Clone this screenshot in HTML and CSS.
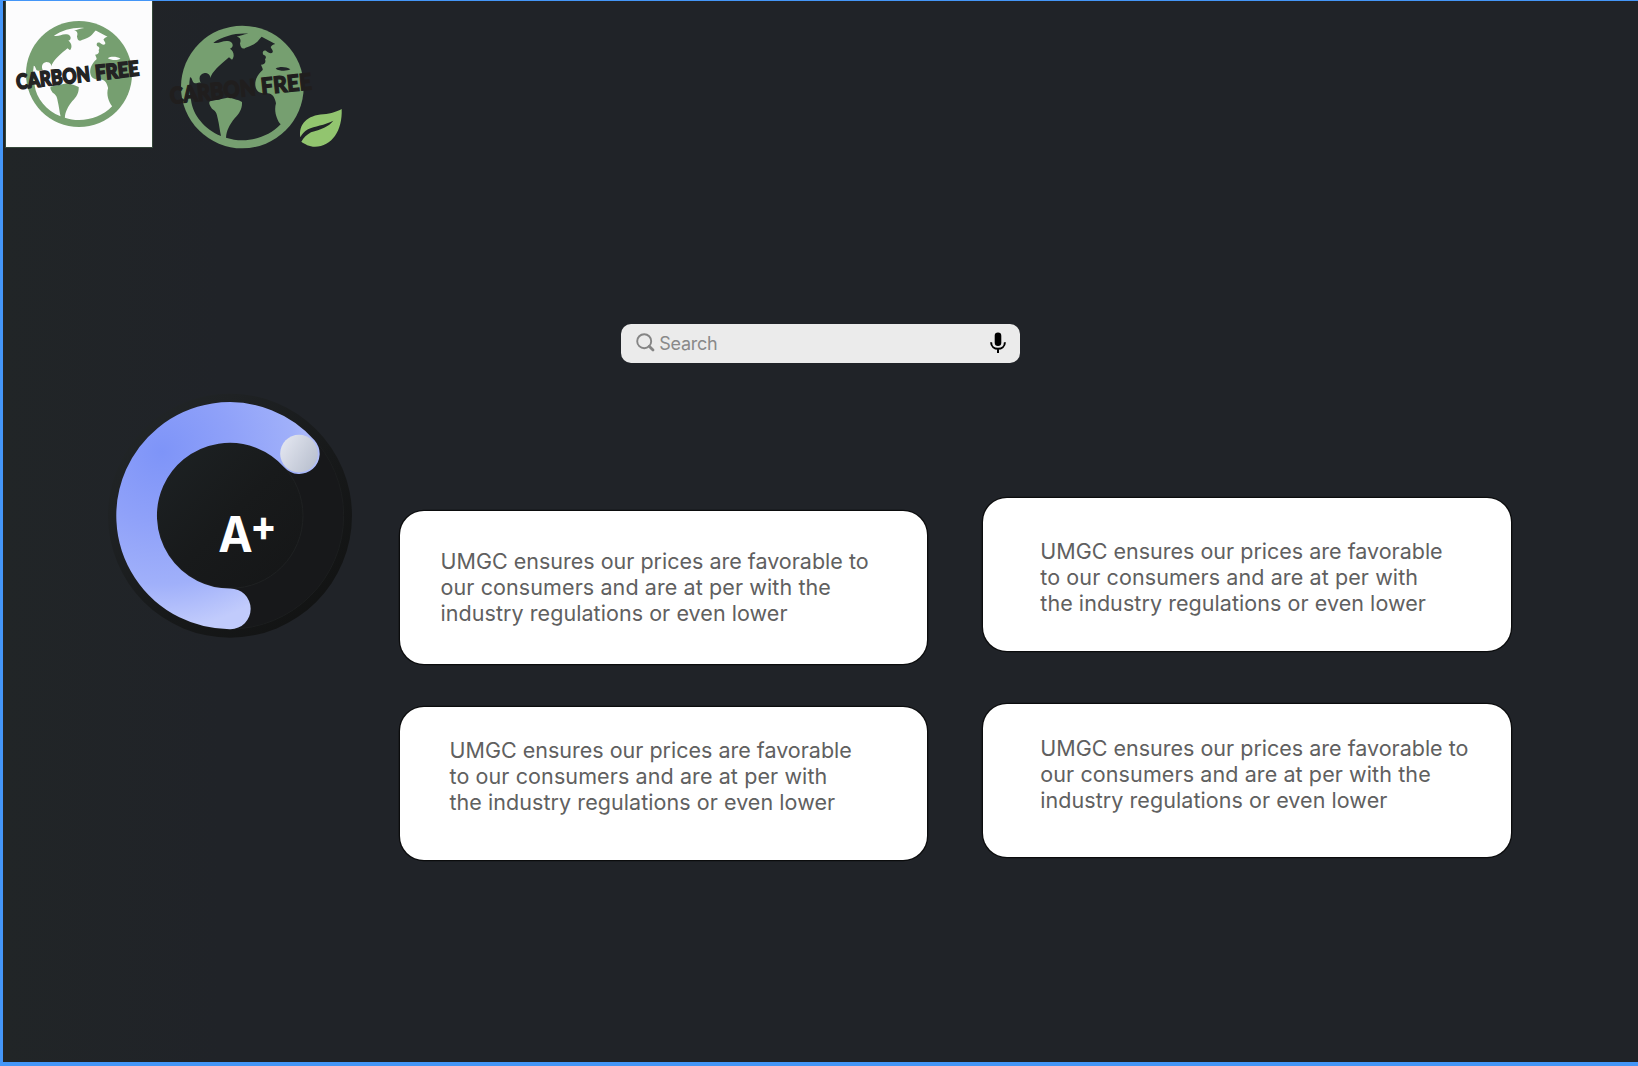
FILE: index.html
```html
<!DOCTYPE html>
<html lang="en">
<head>
<meta charset="utf-8">
<title>Carbon Free</title>
<link rel="stylesheet" href="styles.css">
</head>
<body>
<svg class="defs" width="0" height="0" aria-hidden="true">
  <defs>
    <symbol id="globe" viewBox="60 74 374 374" overflow="visible">
      <circle cx="247" cy="261" r="184" fill="#769f70"/>
      <path fill="currentColor" d="M160 128C190 108 228 98 265 101C250 103 240 107 230 110C241 111 244 120 240 130C241 145 250 149 257 143C272 138 281 134 287 129C294 125 299 115 305 110L346 132C338 134 334 138 332 141C334 147 340 150 338 157C332 163 325 157 318 152C309 149 306 158 310 164C318 166 320 173 315 178C319 187 313 194 303 194C306 201 309 206 308 210C289 226 283 247 287 262C291 276 300 281 322 280C338 281 344 292 348 310C341 332 350 359 362 373C332 405 290 420 247 421C230 421 214 418 198 413C199 392 209 374 224 355C239 340 247 325 246 306C235 299 224 300 210 292L150 304C144 309 151 318 156 326C167 333 171 340 173 355C178 375 179 391 183 408C134 388 98 345 93 300C87 280 86 255 90 232C97 232 96 247 103 249C110 253 115 244 122 249C115 234 119 222 134 219C148 219 155 230 148 241L153 228C164 207 186 190 207 172L216 179C225 168 221 153 210 146C223 142 220 124 204 123C187 121 177 132 160 128Z"/>
      <path fill="currentColor" d="M347 206C358 199 378 200 391 208C378 215 358 213 347 206Z"/>
    </symbol>
  </defs>
</svg>

<header class="header">
  <svg class="logo-tile" viewBox="6 1 146 146">
    <use href="#globe" x="25.1" y="20.1" width="107.8" height="107.8"/>
    <g class="wordmark" transform="translate(17 89.2) rotate(-6.4)">
      <text x="0" y="0" textLength="74" lengthAdjust="spacingAndGlyphs">CARBON</text>
      <text x="79.500" y="0" textLength="44" lengthAdjust="spacingAndGlyphs">FREE</text>
    </g>
  </svg>
  <svg class="logo-dark" viewBox="0 3 570 480">
    <use href="#globe" x="60" y="74" width="374" height="374"/>
    <g class="wordmark large" transform="translate(32 312) rotate(-6)">
      <text x="0" y="0" textLength="258" lengthAdjust="spacingAndGlyphs">CARBON</text>
      <text x="275" y="0" textLength="152" lengthAdjust="spacingAndGlyphs">FREE</text>
    </g>
    <path fill="#92c56f" d="M545 327C548 392 515 440 465 440C448 440 434 432 424 425C431 413 440 404 453 397C482 388 507 380 520 362C494 376 463 378 444 388C432 395 426 402 421 412C415 372 442 346 490 343C515 340 531 335 545 327Z"/>
  </svg>
</header>

<div class="search">
  <svg class="search-icon" viewBox="0 0 20 20"><circle cx="8.200" cy="8.200" r="7" fill="none" stroke="#858585" stroke-width="1.900"/><path d="M13.200 13.200L17 17" stroke="#858585" stroke-width="2.800" stroke-linecap="round"/></svg>
  <span class="search-label">Search</span>
  <svg class="mic" viewBox="0 0 16 22"><rect x="4.700" y="0.500" width="6.600" height="13.500" rx="3.300"/><path d="M1.100 10.200C1.100 19 14.900 19 14.900 10.200M8 16.500V21" fill="none" stroke="#000" stroke-width="2"/></svg>
</div>

<main class="main">
  <svg class="dial" viewBox="0 0 810 795">
    <defs>
      <linearGradient id="face" x1="0.100" y1="0.100" x2="0.900" y2="0.900"><stop offset="0" stop-color="#212527"/><stop offset=".2" stop-color="#1f2224"/><stop offset=".6" stop-color="#17191a"/><stop offset="1" stop-color="#121313"/></linearGradient>
      <linearGradient id="inner" x1="0" y1="0" x2="1" y2="1"><stop offset="0" stop-color="#1d2224"/><stop offset=".5" stop-color="#181a1b"/><stop offset="1" stop-color="#151617"/></linearGradient>
      <radialGradient id="arc" gradientUnits="userSpaceOnUse" cx="185" cy="200" r="530"><stop offset="0" stop-color="#7e94f8"/><stop offset=".4" stop-color="#8fa1f9"/><stop offset=".75" stop-color="#a0b0fa"/><stop offset="1" stop-color="#c1cbfc"/></radialGradient>
      <linearGradient id="knob" x1="0" y1="0.200" x2="1" y2="0.800"><stop offset="0" stop-color="#e3e6f0"/><stop offset="1" stop-color="#b8bfce"/></linearGradient>
    </defs>
    <circle cx="390" cy="392" r="366" fill="url(#face)"/>
    <circle cx="391" cy="392" r="340" fill="#17181a" stroke="#1c1e1f" stroke-width="3"/>
    <circle cx="391" cy="392" r="218" fill="url(#inner)" stroke="#1f2122" stroke-width="3"/>
    <path d="M391 671.500A279.500 279.500 0 1 1 598 206" fill="none" stroke="url(#arc)" stroke-width="122" stroke-linecap="round"/>
    <circle cx="597" cy="206" r="56.500" fill="url(#knob)"/>
    <text class="grade" transform="translate(355 500) scale(0.93 1)">A<tspan class="plus" dx="-9" dy="-31">+</tspan></text>
  </svg>

  <section class="column">
    <p class="card card-a">UMGC ensures our prices are favorable to<br><span class="wide">our consumers and are at per with the</span><br><span class="mid">industry regulations or even lower</span></p>
    <p class="card card-b">UMGC ensures our prices are favorable<br><span class="wide">to our consumers and are at per with</span><br><span class="mid">the industry regulations or even lower</span></p>
  </section>
  <section class="column column-right">
    <p class="card card-c">UMGC ensures our prices are favorable<br><span class="wide">to our consumers and are at per with</span><br><span class="mid">the industry regulations or even lower</span></p>
    <p class="card card-d">UMGC ensures our prices are favorable to<br><span class="wide">our consumers and are at per with the</span><br><span class="mid">industry regulations or even lower</span></p>
  </section>
</main>
</body>
</html>
```
FILE: styles.css
```css
* { box-sizing: border-box; }

body {
  margin: 0;
  height: 1066px;
  overflow: hidden;
  border: solid #4496f8;
  border-width: 1px 0 4px 3px;
  background: linear-gradient(90deg, #212527 0, #202328 220px);
  font-family: Inter, "Liberation Sans", sans-serif;
}

.defs { display: block; }

.header {
  display: flex;
  align-items: flex-start;
  height: 160px;
  padding-left: 3px;
}

.logo-tile {
  width: 146px;
  height: 146px;
  background: #fcfcfd;
  color: #fcfcfd;
  outline: 1px solid #35483a;
  outline-offset: -0.5px;
}

.logo-dark {
  width: 190px;
  height: 160px;
  margin-left: 8px;
  color: #202428;
}

.wordmark {
  font-family: Lato, sans-serif;
  font-size: 20.5px;
  font-weight: 900;
  fill: #232323;
  stroke: #232323;
  stroke-width: 1.6px;
}

.wordmark.large {
  font-size: 68px;
  fill: #201e1e;
  stroke: #201e1e;
  stroke-width: 4px;
}

.search {
  display: flex;
  align-items: center;
  width: 398.5px;
  height: 39px;
  margin: 162.7px 0 0 618.3px;
  padding: 0 14px 0 14.5px;
  border-radius: 10px;
  background: #ebebeb;
}

.search-icon { width: 20px; height: 20px; }

.search-label {
  margin-left: 3.5px;
  color: #898989;
  font-size: 18px;
  letter-spacing: -0.3px;
}

.mic { width: 16px; height: 22px; margin-left: auto; }

.main {
  display: flex;
  align-items: flex-start;
  margin-top: 22.3px;
  padding-left: 97px;
}

.dial { flex: none; width: 270px; height: 265px; }

.grade {
  font-family: Inter, sans-serif;
  font-size: 149px;
  font-weight: 700;
  fill: #fff;
}

.plus { font-size: 128px; }

.column {
  display: flex;
  flex-direction: column;
  gap: 43px;
  width: 527.5px;
  margin-left: 29.5px;
  padding-top: 125.7px;
}

.column-right {
  gap: 53px;
  margin-left: 56.3px;
  padding-top: 112.7px;
}

.card {
  height: 153.3px;
  margin: 0;
  border-radius: 24px;
  background: #fff;
  box-shadow: 0 0 0 1.3px #0b0c0d;
  color: #606060;
  font-size: 21.5px;
  line-height: 26px;
  white-space: nowrap;
}

.wide { letter-spacing: 0.1px; }
.mid { letter-spacing: 0.06px; }

.card-a { padding: 37.6px 0 0 41px; }
.card-b { padding: 30.2px 0 0 50px; }
.card-c { padding: 40.2px 0 0 57px; }
.card-d { padding: 31.2px 0 0 57px; }
```
